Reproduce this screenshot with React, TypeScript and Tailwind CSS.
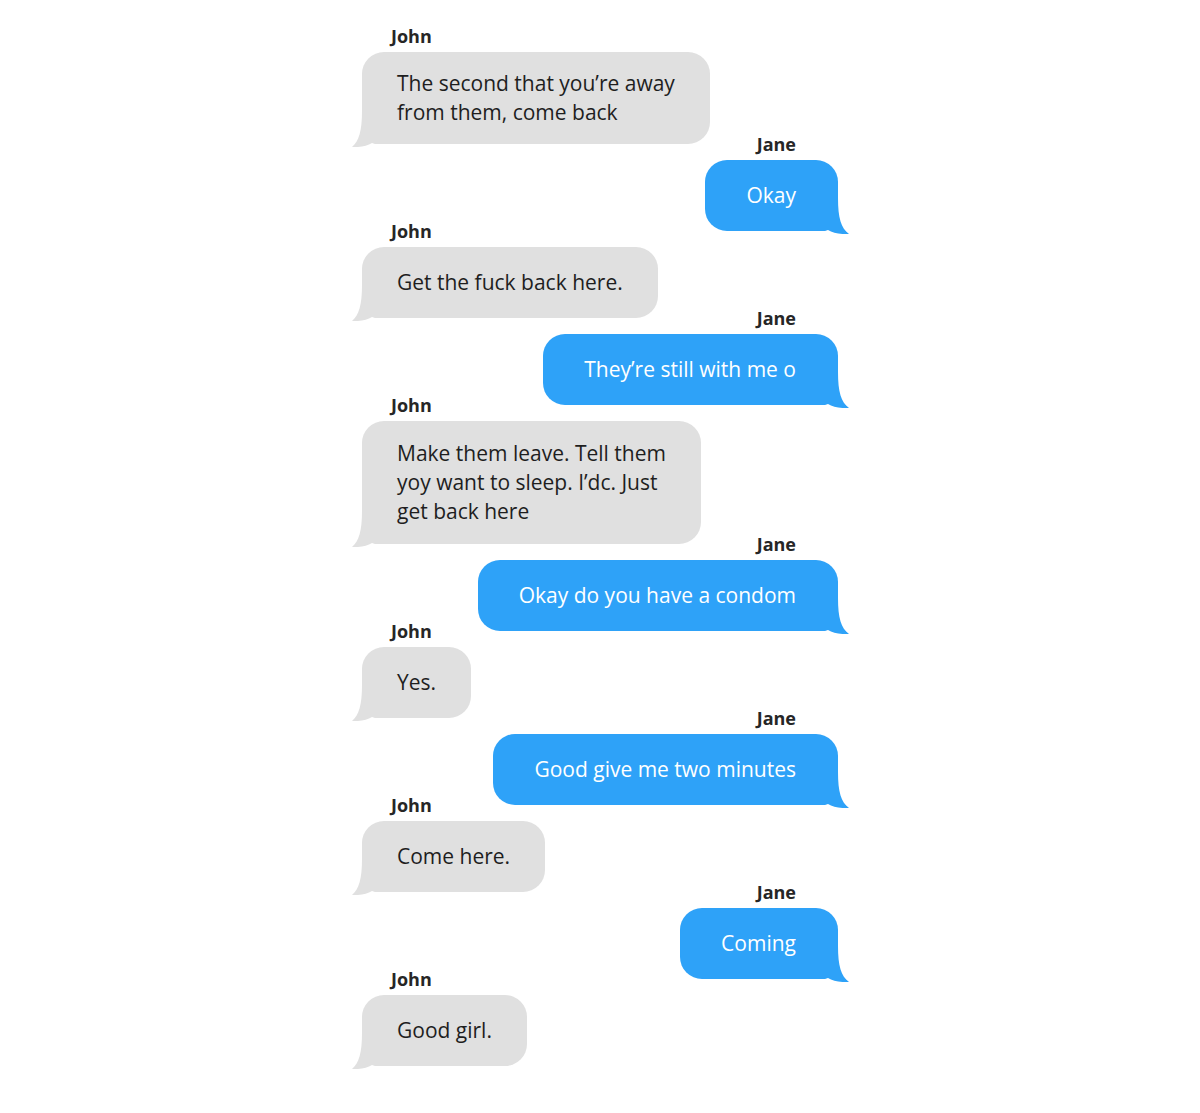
import React from "react";

type Msg = { from: "John" | "Jane"; lines: string[] };

const msgs: Msg[] = [
  { from: "John", lines: ["The second that you\u2019re away", "from them, come back"] },
  { from: "Jane", lines: ["Okay"] },
  { from: "John", lines: ["Get the fuck back here."] },
  { from: "Jane", lines: ["They\u2019re still with me o"] },
  { from: "John", lines: ["Make them leave. Tell them", "yoy want to sleep. I\u2019dc. Just", "get back here"] },
  { from: "Jane", lines: ["Okay do you have a condom"] },
  { from: "John", lines: ["Yes."] },
  { from: "Jane", lines: ["Good give me two minutes"] },
  { from: "John", lines: ["Come here."] },
  { from: "Jane", lines: ["Coming"] },
  { from: "John", lines: ["Good girl."] },
];

function LeftTail() {
  return (
    <svg
      className="absolute left-[-10px] bottom-[-3px]"
      width="40"
      height="36"
      viewBox="0 0 40 36"
    >
      <path d="M10 0 C10 20 7 30 0 36 C8 36.5 15 35 20 32 C22 33 24 33 26 33 L40 33 L40 0 Z" fill="#e0e0e0" />
    </svg>
  );
}

function RightTail() {
  return (
    <svg
      className="absolute right-[-11px] bottom-[-3px]"
      width="40"
      height="36"
      viewBox="0 0 40 36"
    >
      <path d="M29 0 C29 20 32 30 40 36 C31 36.5 24 35 19 32 C17 33 15 33 13 33 L0 33 L0 0 Z" fill="#2ea2f8" />
    </svg>
  );
}

export default function App() {
  return (
    <div
      className="w-full min-h-[1113px] bg-white flex justify-center pt-[26px]"
      style={{ fontFamily: '"Open Sans", "Noto Sans", sans-serif' }}
    >
      <div className="w-[476px] flex flex-col">
        {msgs.map((m, i) => {
          const left = m.from === "John";
          const tall = m.lines.length > 2;
          return (
            <div
              key={i}
              className={
                (left ? "flex flex-col items-start" : "flex flex-col items-end") +
                (i === 0 ? "" : " -mt-[10px]")
              }
            >
              <div
                className={
                  "text-[18px] font-bold leading-[20px] text-[#262626] " +
                  (left ? "pl-[29px]" : "pr-[42px]")
                }
              >
                {m.from}
              </div>
              <div
                className={
                  "relative mt-[6px] rounded-[22px] min-h-[71px] flex flex-col justify-center text-[21px] leading-[29px] whitespace-nowrap " +
                  (tall ? "py-[18px] " : "py-[17px] ") +
                  (left
                    ? "bg-[#e0e0e0] text-[#1e1e1e] pl-[35px] pr-[35px]"
                    : "bg-[#2ea2f8] text-white pl-[41px] pr-[42px] items-center")
                }
              >
                {left ? <LeftTail /> : <RightTail />}
                {m.lines.map((l, j) => (
                  <span key={j} className="relative">
                    {l}
                  </span>
                ))}
              </div>
            </div>
          );
        })}
      </div>
    </div>
  );
}
